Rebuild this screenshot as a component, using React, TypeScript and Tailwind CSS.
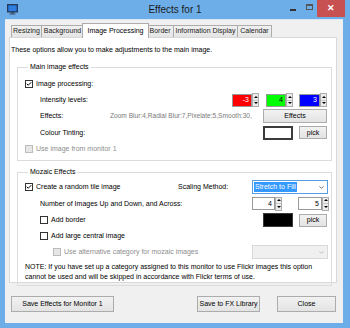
import { Check, ChevronDown } from 'lucide-react';

const FONT = { fontFamily: '"Liberation Sans", Arial, sans-serif' };

function Box({ checked, disabled }: { checked?: boolean; disabled?: boolean }) {
    return (
        <span
            className={
                'flex items-center justify-center w-[8px] h-[8px] shrink-0 border ' +
                (disabled ? 'border-[#bcbcbc] bg-[#e6e6e6]' : 'border-[#333] bg-white')
            }
        >
            {checked && <Check className="w-[8px] h-[8px] text-black" strokeWidth={4} />}
        </span>
    );
}

function Spinner() {
    return (
        <div className="flex flex-col w-[7px] h-[14px] border border-[#acacac] bg-[#ececec]">
            <div className="flex-1 flex items-center justify-center border-b border-[#c8c8c8]">
                <span className="w-0 h-0 border-l-[2px] border-r-[2px] border-b-[2px] border-l-transparent border-r-transparent border-b-black" />
            </div>
            <div className="flex-1 flex items-center justify-center">
                <span className="w-0 h-0 border-l-[2px] border-r-[2px] border-t-[2px] border-l-transparent border-r-transparent border-t-black" />
            </div>
        </div>
    );
}

function Spin({ value, bg, fg, w }: { value: string; bg: string; fg: string; w: string }) {
    return (
        <div className="flex items-center">
            <div className={`${w} h-[13px] border border-[#999] ${bg} ${fg} flex items-center justify-end pr-[2px] text-[7px]`}>
                {value}
            </div>
            <Spinner />
        </div>
    );
}

function Btn({ children, className }: { children: React.ReactNode; className: string }) {
    return (
        <div
            className={
                'flex items-center justify-center border border-[#acacac] bg-gradient-to-b from-[#f2f2f2] to-[#e3e3e3] text-[7px] text-black ' +
                className
            }
        >
            {children}
        </div>
    );
}

const TABS = ['Resizing', 'Background', 'Image Processing', 'Border', 'Information Display', 'Calendar'];
const TAB_W = ['w-[31px]', 'w-[42px]', 'w-[67px]', 'w-[27px]', 'w-[64px]', 'w-[34px]'];

export default function App() {
    return (
        <div className="w-[350px] h-[328px] bg-[#6eaee8] flex flex-col overflow-hidden text-black" style={FONT}>
            {/* title bar */}
            <div className="h-[19px] relative flex items-center shrink-0">
                <svg className="absolute left-[7px] top-[4px]" width="11" height="11" viewBox="0 0 11 11">
                    <rect x="0.5" y="0.5" width="10" height="7.5" fill="#1a4f9c" stroke="#2a3a55" />
                    <rect x="1.5" y="1.5" width="8" height="5.5" fill="#2f7fe0" />
                    <rect x="4" y="8" width="3" height="1.5" fill="#3a4a60" />
                    <rect x="2.5" y="9.5" width="6" height="1" fill="#3a4a60" />
                </svg>
                <div className="w-full text-center text-[10px] text-[#1b1b1b]">Effects for 1</div>
                <span className="absolute left-[290px] top-[9px] w-[6px] h-[2px] bg-[#333]" />
                <span className="absolute left-[306px] top-[4px] w-[7px] h-[6px] border border-[#555] border-t-2" />
                <div className="absolute left-[317px] top-0 w-[28px] h-[17px] bg-[#c75050] flex items-center justify-center text-white text-[9px] font-bold">
                    ✕
                </div>
            </div>

            {/* client */}
            <div className="flex-1 ml-[5px] mr-[7px] mb-[5px] bg-[#f0f0f0] flex flex-col border-t border-[#d8e7f5]">
                {/* tabs */}
                <div className="h-[17px] flex items-end pl-[6px]">
                    {TABS.map((t, i) =>
                        i === 2 ? (
                            <div
                                key={t}
                                className={`${TAB_W[i]} -mx-[2px] h-[15px] -mb-px relative z-10 bg-white border border-b-0 border-[#acacac] flex items-center justify-center text-[7px] whitespace-nowrap`}
                            >
                                {t}
                            </div>
                        ) : (
                            <div
                                key={t}
                                className={`${TAB_W[i]} h-[12px] border border-l-0 first:border-l border-b-0 border-[#acacac] bg-gradient-to-b from-[#f0f0f0] to-[#e5e5e5] flex items-center justify-center text-[7px] text-[#222] whitespace-nowrap`}
                            >
                                {t}
                            </div>
                        )
                    )}
                </div>

                {/* panel */}
                <div className="ml-[4px] w-[328px] h-[246px] bg-white border border-[#d9d9d9] pt-[7px] text-[7px] leading-[10px]">
                    <div className="pl-[1px] h-[10px]">These options allow you to make adjustments to the main image.</div>

                    <fieldset className="mt-[7px] ml-[7px] w-[315px] border border-[#dcdcdc] pl-[7px] pb-[3px]">
                        <legend className="ml-[3px] px-[2px] h-[10px]">Main image effects</legend>
                        <div className="pt-[4px]">
                            <div className="h-[16px] flex items-center gap-[3px]">
                                <Box checked />
                                <span>Image processing:</span>
                            </div>
                            <div className="h-[16px] flex items-center pl-[15px]">
                                <span className="w-[192px]">Intensity levels:</span>
                                <Spin value="-3" bg="bg-[#ff0000]" fg="text-white" w="w-[20px]" />
                                <div className="w-[7px]" />
                                <Spin value="4" bg="bg-[#00ff00]" fg="text-black" w="w-[20px]" />
                                <div className="w-[6px]" />
                                <Spin value="3" bg="bg-[#0000ff]" fg="text-white" w="w-[21px]" />
                            </div>
                            <div className="h-[16px] flex items-center pl-[15px]">
                                <span className="w-[70px]">Effects:</span>
                                <span className="w-[153px] text-[6.6px] text-[#7a7a7a] whitespace-nowrap overflow-hidden">
                                    Zoom Blur:4,Radial Blur:7,Pixelate:5,Smooth:30,
                                </span>
                                <Btn className="w-[64px] h-[14px]">Effects</Btn>
                            </div>
                            <div className="h-[17px] flex items-center pl-[15px]">
                                <span className="w-[223px]">Colour Tinting:</span>
                                <div className="w-[30px] h-[14px] border-2 border-[#3c3c3c] bg-white" />
                                <div className="w-[6px]" />
                                <Btn className="w-[28px] h-[13px]">pick</Btn>
                            </div>
                            <div className="h-[16px] flex items-center gap-[3px] text-[#8d8d8d]">
                                <Box disabled />
                                <span>Use image from monitor 1</span>
                            </div>
                        </div>
                    </fieldset>

                    <fieldset className="mt-[6px] ml-[7px] w-[315px] border border-[#dcdcdc] pl-[7px] pb-[1px]">
                        <legend className="ml-[3px] px-[2px] h-[10px]">Mozaic Effects</legend>
                        <div className="pt-[2px]">
                            <div className="h-[16px] flex items-center">
                                <div className="w-[153px] flex items-center gap-[3px]">
                                    <Box checked />
                                    <span>Create a random tile image</span>
                                </div>
                                <span className="w-[74px]">Scaling Method:</span>
                                <div className="w-[76px] h-[14px] border border-[#569de5] bg-white flex items-center pl-[1px] pr-[2px]">
                                    <span className="bg-[#3399ff] text-white px-[1px] leading-[10px]">Stretch to Fill</span>
                                    <ChevronDown className="ml-auto w-[7px] h-[7px] text-[#444]" strokeWidth={2.5} />
                                </div>
                            </div>
                            <div className="h-[17px] flex items-center pl-[15px]">
                                <span className="w-[212px]">Number of Images Up and Down, and Across:</span>
                                <Spin value="4" bg="bg-white" fg="text-black" w="w-[23px]" />
                                <div className="w-[16px]" />
                                <Spin value="5" bg="bg-white" fg="text-black" w="w-[24px]" />
                            </div>
                            <div className="h-[16px] flex items-center pl-[15px]">
                                <div className="w-[223px] flex items-center gap-[3px]">
                                    <Box />
                                    <span>Add border</span>
                                </div>
                                <div className="w-[30px] h-[14px] border border-[#3c3c3c] bg-black" />
                                <div className="w-[6px]" />
                                <Btn className="w-[28px] h-[13px]">pick</Btn>
                            </div>
                            <div className="h-[16px] flex items-center gap-[3px] pl-[15px]">
                                <Box />
                                <span>Add large central image</span>
                            </div>
                            <div className="h-[16px] flex items-center pl-[28px] text-[#8d8d8d]">
                                <div className="w-[199px] flex items-center gap-[3px]">
                                    <Box disabled />
                                    <span>Use alternative category for mozaic images</span>
                                </div>
                                <div className="w-[76px] h-[14px] border border-[#d9d9d9] bg-[#f0f0f0] flex items-center justify-end pr-[2px]">
                                    <ChevronDown className="w-[7px] h-[7px] text-[#aaa]" strokeWidth={2.5} />
                                </div>
                            </div>
                            <div className="pt-[2px] pb-[2px] leading-[10px] w-[290px]">
                                NOTE: If you have set up a category assigned to this monitor to use Flickr images this option cannot be used and will be skipped in accordance with Flickr terms of use.
                            </div>
                        </div>
                    </fieldset>
                </div>

                {/* buttons */}
                <div className="mt-[13px] flex items-center pl-[6px]">
                    <Btn className="w-[103px] h-[16px]">Save Effects for Monitor 1</Btn>
                    <Btn className="ml-[83px] w-[63px] h-[16px]">Save to FX Library</Btn>
                    <Btn className="ml-[17px] w-[59px] h-[16px]">Close</Btn>
                </div>
            </div>
        </div>
    );
}
